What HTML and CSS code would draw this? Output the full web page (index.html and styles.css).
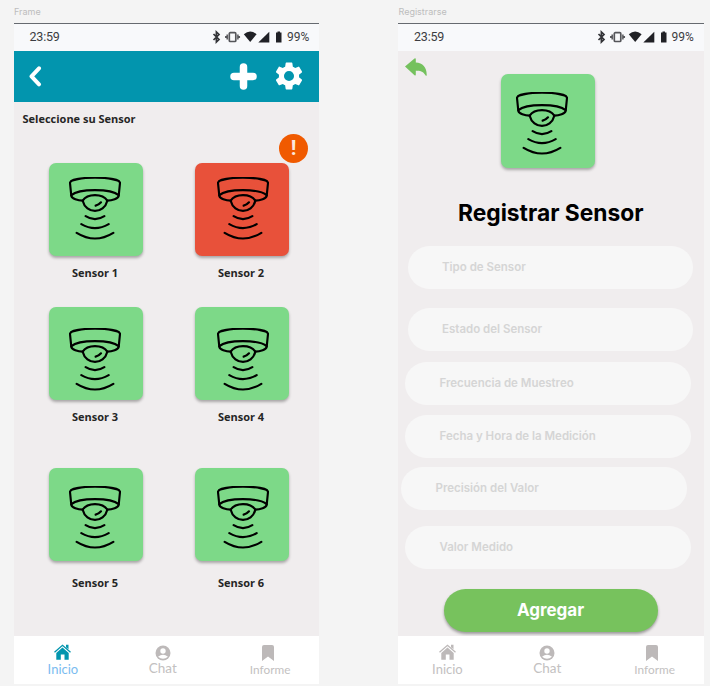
FILE: index.html
```html
<!DOCTYPE html>
<html lang="es">
<head>
<meta charset="utf-8">
<title>Sensores</title>
<link rel="stylesheet" href="styles.css">
</head>
<body>
<svg class="defs" width="0" height="0">
  <symbol id="sensor" viewBox="0 0 156 192">
    <g fill="none" stroke="#000" stroke-width="6.500" stroke-linecap="round" stroke-linejoin="round">
      <path d="M3 18C3 -3 153 -3 153 18L149 57C147 65 130 71 115 71M3 18L7 57C9 65 26 71 41 71"/>
      <path d="M7 54.500C30 34.500 126 34.500 149 54.500"/>
      <path d="M41 71C55 49 101 49 115 71C105 112 51 112 41 71Z"/>
      <path d="M80 86Q89 84 96 76M50 117.500Q78 135.500 106 117.500M37 141.500Q78 165.500 119 141.500M23 167.500Q78 201.500 133 167.500"/>
    </g>
  </symbol>
  <symbol id="status" viewBox="0 0 75 14">
    <path d="M1.500 4L7 9.500L4.400 12V2L7 4.500L1.500 10" fill="none" stroke="#333438" stroke-width="1.700"/>
    <rect x="17.300" y="2.700" width="6.500" height="8.800" rx="1" fill="none" stroke="#55565a" stroke-width="1.700"/>
    <path d="M15.200 4.500V9.500M25.900 4.500V9.500M13.800 6V8M27.300 6V8" stroke="#55565a" stroke-width="1.500"/>
    <path d="M31.800 4.200Q38.200 -1 44.600 4.200L38.200 12Z" fill="#202126"/>
    <path d="M57.300 1.800V12.400H46.300Z" fill="#202126"/>
    <path d="M64 2.600H65.500V1.500H68V2.600H69.500V12.500H64Z" fill="#202126"/>
  </symbol>
  <symbol id="home" viewBox="0 0 17 16">
    <path d="M.5 8.300L8.500 1.300L16.500 8.300" fill="none" stroke="currentColor" stroke-width="1.300"/>
    <path d="M2.300 9L8.500 3.600L14.700 9V15.700H10.500V10.500H6.800V15.700H2.300ZM12 .8H14.500V5.300L12 3.200Z" fill="currentColor"/>
  </symbol>
  <symbol id="user" viewBox="0 0 16 16">
    <circle cx="8" cy="8" r="7.500" fill="currentColor"/>
    <circle cx="8" cy="6" r="2.700" fill="#fff"/>
    <path d="M3 11.800Q8 7.800 13 11.800Q8 15.500 3 11.800Z" fill="#fff"/>
  </symbol>
  <symbol id="mark" viewBox="0 0 12 16">
    <path d="M0 16V2Q0 0 2 0H10Q12 0 12 2V16L6 11.500Z" fill="currentColor"/>
  </symbol>
</svg>

<div class="board">
  <section class="screen">
    <div class="frame-name">Frame</div>
    <div class="phone">
      <div class="status"><span class="clock">23:59</span><svg class="status-icons"><use href="#status"/></svg><span class="battery">99%</span></div>
      <header class="bar">
        <svg class="back" viewBox="0 0 14 22"><path d="M11 3.300L3.500 11.300L11 19.300" fill="none" stroke="#fff" stroke-width="4" stroke-linecap="round" stroke-linejoin="round"/></svg>
        <svg class="plus" viewBox="0 0 27 27"><path d="M13.500 4V23M4 13.500H23" stroke="#fff" stroke-width="7.500" stroke-linecap="round"/></svg>
        <svg class="gear" viewBox="2 2 20 20"><path fill="#fff" d="M19.140 12.940c.040-.300.060-.610.060-.940 0-.320-.020-.640-.070-.940l2.030-1.580a.49.490 0 0 0 .120-.610l-1.920-3.320a.488.488 0 0 0-.590-.220l-2.390.960c-.500-.380-1.030-.700-1.620-.940l-.360-2.540a.484.484 0 0 0-.480-.410h-3.840c-.240 0-.430.170-.470.410l-.360 2.540c-.590.240-1.130.570-1.620.940l-2.390-.960c-.220-.080-.470 0-.590.220L2.740 8.870c-.120.210-.080.470.120.610l2.030 1.580c-.050.300-.090.630-.090.940s.020.640.070.940l-2.030 1.580a.49.490 0 0 0-.120.610l1.920 3.320c.120.220.370.290.590.220l2.390-.960c.500.380 1.030.700 1.620.940l.360 2.540c.050.240.240.410.480.410h3.840c.240 0 .440-.170.470-.410l.360-2.540c.590-.240 1.130-.560 1.620-.940l2.390.960c.220.080.470 0 .590-.220l1.920-3.320c.120-.220.070-.470-.120-.610l-2.010-1.580zM12 15.600A3.600 3.600 0 1 1 12 8.400a3.600 3.600 0 0 1 0 7.200z"/></svg>
      </header>
      <h2 class="heading">Seleccione su Sensor</h2>
      <main class="grid">
        <div class="cell"><div class="tile high"><svg><use href="#sensor"/></svg></div><span>Sensor 1</span></div>
        <div class="cell"><div class="tile high red right"><svg><use href="#sensor"/></svg><i class="alert">!</i></div><span>Sensor 2</span></div>
        <div class="cell"><div class="tile low"><svg><use href="#sensor"/></svg></div><span>Sensor 3</span></div>
        <div class="cell"><div class="tile low right"><svg><use href="#sensor"/></svg></div><span>Sensor 4</span></div>
        <div class="cell last"><div class="tile"><svg><use href="#sensor"/></svg></div><span>Sensor 5</span></div>
        <div class="cell last"><div class="tile right"><svg><use href="#sensor"/></svg></div><span>Sensor 6</span></div>
      </main>
      <nav class="nav">
        <a class="inicio active"><svg><use href="#home"/></svg>Inicio</a>
        <a class="chat"><svg><use href="#user"/></svg>Chat</a>
        <a class="informe"><svg><use href="#mark"/></svg>Informe</a>
      </nav>
    </div>
  </section>

  <section class="screen">
    <div class="frame-name">Registrarse</div>
    <div class="phone">
      <div class="status"><span class="clock">23:59</span><svg class="status-icons"><use href="#status"/></svg><span class="battery">99%</span></div>
      <div class="hero">
        <svg class="reply" viewBox="0 0 22 18"><path fill="#75c15e" d="M0 8.500L9.500 .5Q10.800 -.2 10.800 1.300V4.500C18 5 22 9.500 21.700 17.500Q21 18.300 20.500 17.300C18 13.300 15 12.800 10.800 12.800V16.500Q10.800 18.200 9.500 17.300Z"/></svg>
        <div class="tile register"><svg><use href="#sensor"/></svg></div>
      </div>
      <h1 class="title">Registrar Sensor</h1>
      <form class="form">
        <div class="field f1">Tipo de Sensor</div>
        <div class="field f2">Estado del Sensor</div>
        <div class="field f3">Frecuencia de Muestreo</div>
        <div class="field f4">Fecha y Hora de la Medición</div>
        <div class="field f5">Precisión del Valor</div>
        <div class="field f6">Valor Medido</div>
        <button type="button" class="submit">Agregar</button>
      </form>
      <nav class="nav">
        <a class="inicio"><svg><use href="#home"/></svg>Inicio</a>
        <a class="chat"><svg><use href="#user"/></svg>Chat</a>
        <a class="informe"><svg><use href="#mark"/></svg>Informe</a>
      </nav>
    </div>
  </section>
</div>
</body>
</html>
```
FILE: styles.css
```css
* { box-sizing: border-box; }
body { margin: 0; height: 686px; overflow: hidden; background: #f4f4f4; font-family: Inter, sans-serif; }
svg { display: block; }
.defs { position: absolute; }
.board { display: flex; gap: 79px; padding-left: 13.5px; }
.screen { width: 305.5px; flex: none; }
.frame-name { height: 23px; padding: 6px 0 0 .5px; font-size: 9px; line-height: 12px; color: #bdbdbd; }
.phone { display: flex; flex-direction: column; height: 661px; background: #f0edee; border-top: 1px solid #666a70; }

.status { display: flex; align-items: center; flex: none; height: 27px; padding: 0 10px 0 16px; background: #f8f9fb; font: 12px/14px Roboto, sans-serif; color: #3c3d42; }
.status span { position: relative; top: -1px; }
.status .clock { margin-right: auto; font-size: 12.500px; letter-spacing: -.2px; }
.status-icons { width: 75px; height: 14px; margin-top: -2px; }
.battery { width: 22px; white-space: nowrap; }

.bar { display: flex; align-items: center; flex: none; height: 50.500px; padding: 0 16px 0 14.500px; background: #0295ae; }
.back { width: 14px; height: 22px; margin-right: auto; }
.plus { width: 27px; height: 27px; margin-right: 18px; }
.gear { width: 28px; height: 30px; }
.heading { margin: 9.500px 0 0 9px; font: bold 11px/16px "Open Sans", sans-serif; color: #252525; white-space: nowrap; }

.grid { display: grid; grid-template-columns: 94px 94px; grid-template-rows: 144px 161px auto; column-gap: 52px; padding: 35.500px 0 0 35.500px; }
.cell { display: flex; flex-direction: column; align-items: center; font: bold 11px/15px "Open Sans", sans-serif; color: #252525; }
.cell span { margin-top: 9px; margin-right: 2px; }
.cell.last span { margin-top: 14px; }
.tile { position: relative; flex: none; width: 94px; height: 93.500px; padding: 18px 0 0 20px; border-radius: 7px; background: #7dd988; box-shadow: 0 2px 3px rgba(0, 0, 0, .3); }
.tile svg { width: 52px; height: 64px; }
.tile.right { padding-left: 22px; }
.tile.high { padding-top: 14.500px; }
.tile.low { padding-top: 21px; }
.tile.red { background: #e8513a; }
.alert { position: absolute; left: 84px; top: -28.500px; width: 29px; height: 29px; border-radius: 50%; background: #f05a00; color: #fbe9df; font: bold 21px/29px Roboto, sans-serif; text-align: center; }

.nav { position: relative; display: grid; grid-template-columns: repeat(3, 1fr); flex: none; height: 48px; margin-top: auto; background: #fff; color: #bdb9b9; }
.nav a { display: flex; flex-direction: column; align-items: center; font: 13px/15px Lato, sans-serif; color: #c3c1c1; }
.nav svg { color: #bdb9b9; }
.nav .inicio { padding: 8px 3px 0 0; }
.inicio svg { width: 17px; height: 16px; margin-bottom: 1.500px; }
.nav .chat { padding: 9px 7px 0 0; font-size: 13.500px; }
.chat svg { width: 16px; height: 16px; }
.nav .informe { padding: 9px 0 0 4px; font-size: 11.800px; }
.informe svg { width: 12px; height: 16px; margin: 0 5px 1px 0; }
.nav a.active { color: #7bbcf0; }
.nav .active svg { color: #0295ae; }

.hero { display: flex; padding: 7px 0 0 6.500px; height: 117px; flex: none; }
.reply { width: 22px; height: 18px; }
.tile.register { margin: 16px 0 0 74px; padding: 17.500px 0 0 15.500px; }
.title { margin: 30px 0 0; text-align: center; font: bold 22.800px/30px Inter, sans-serif; color: #000; white-space: nowrap; }
.form { display: flex; flex-direction: column; align-items: flex-start; padding-top: 18px; }
.field { width: 285.500px; height: 43px; padding-left: 34.500px; border-radius: 22px; background: #f7f7f7; color: #d5d5d5; font-size: 11.500px; font-weight: 600; line-height: 42.500px; white-space: nowrap; }
.f1 { margin-left: 9.500px; }
.f2 { margin: 19px 0 0 9.500px; }
.f3 { margin: 10.500px 0 0 7px; }
.f4 { margin: 10px 0 0 7px; }
.f5 { margin: 9.500px 0 0 3px; }
.f6 { margin: 15.500px 0 0 7px; }
.submit { width: 214px; height: 43px; margin: 20px 0 0 45.500px; padding: 0; border: 0; border-radius: 22px; background: #77c25d; box-shadow: 0 2px 3px rgba(0, 0, 0, .35); color: #fff; font: bold 17px/43px Inter, sans-serif; }
```
